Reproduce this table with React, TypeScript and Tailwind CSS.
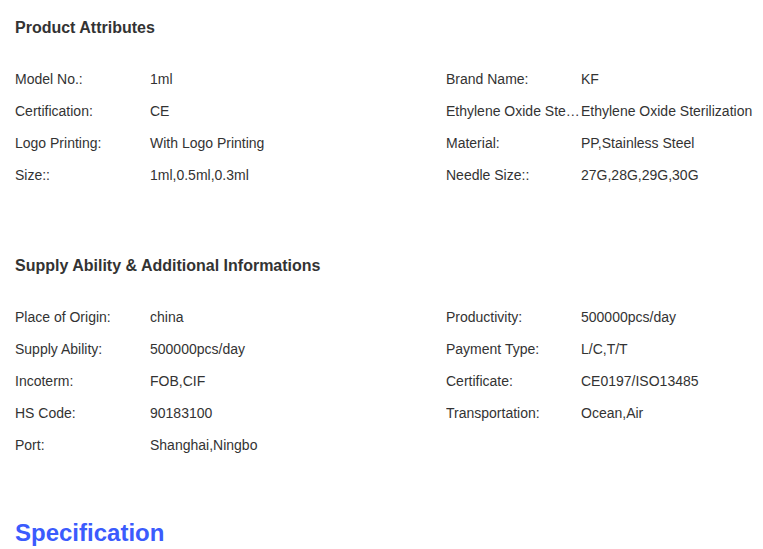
const productAttributes = [
  ["Model No.:", "1ml", "Brand Name:", "KF"],
  ["Certification:", "CE", "Ethylene Oxide Sterilization:", "Ethylene Oxide Sterilization"],
  ["Logo Printing:", "With Logo Printing", "Material:", "PP,Stainless Steel"],
  ["Size::", "1ml,0.5ml,0.3ml", "Needle Size::", "27G,28G,29G,30G"],
]

const supplyInfo = [
  ["Place of Origin:", "china", "Productivity:", "500000pcs/day"],
  ["Supply Ability:", "500000pcs/day", "Payment Type:", "L/C,T/T"],
  ["Incoterm:", "FOB,CIF", "Certificate:", "CE0197/ISO13485"],
  ["HS Code:", "90183100", "Transportation:", "Ocean,Air"],
  ["Port:", "Shanghai,Ningbo"],
]

function Cell({ label, value }: { label?: string, value?: string }) {
  if (!label) return <div />
  return (
    <div className="flex h-8 items-center">
      <span className="w-[135px] shrink-0 truncate">{label}</span>
      <span className="whitespace-nowrap">{value}</span>
    </div>
  )
}

function AttrTable({ rows }: { rows: string[][] }) {
  return (
    <div className="grid grid-cols-[431px_1fr]">
      {rows.map((r, i) => (
        <div key={i} className="contents">
          <Cell label={r[0]} value={r[1]} />
          <Cell label={r[2]} value={r[3]} />
        </div>
      ))}
    </div>
  )
}

export default function App() {
  return (
    <div className="min-h-[549px] bg-white pl-[15px] pt-[18px] text-[14px] text-[#333] font-['Liberation_Sans',Arial,sans-serif]">
      <h2 className="text-[16px] leading-5 font-bold">Product Attributes</h2>
      <div className="mt-[25px]">
        <AttrTable rows={productAttributes} />
      </div>

      <h2 className="mt-[65px] text-[16px] leading-5 font-bold">Supply Ability &amp; Additional Informations</h2>
      <div className="mt-[25px]">
        <AttrTable rows={supplyInfo} />
      </div>

      <h2 className="mt-[56px] text-[24px] leading-8 font-bold text-[#3b5bfd]">Specification</h2>
    </div>
  )
}
